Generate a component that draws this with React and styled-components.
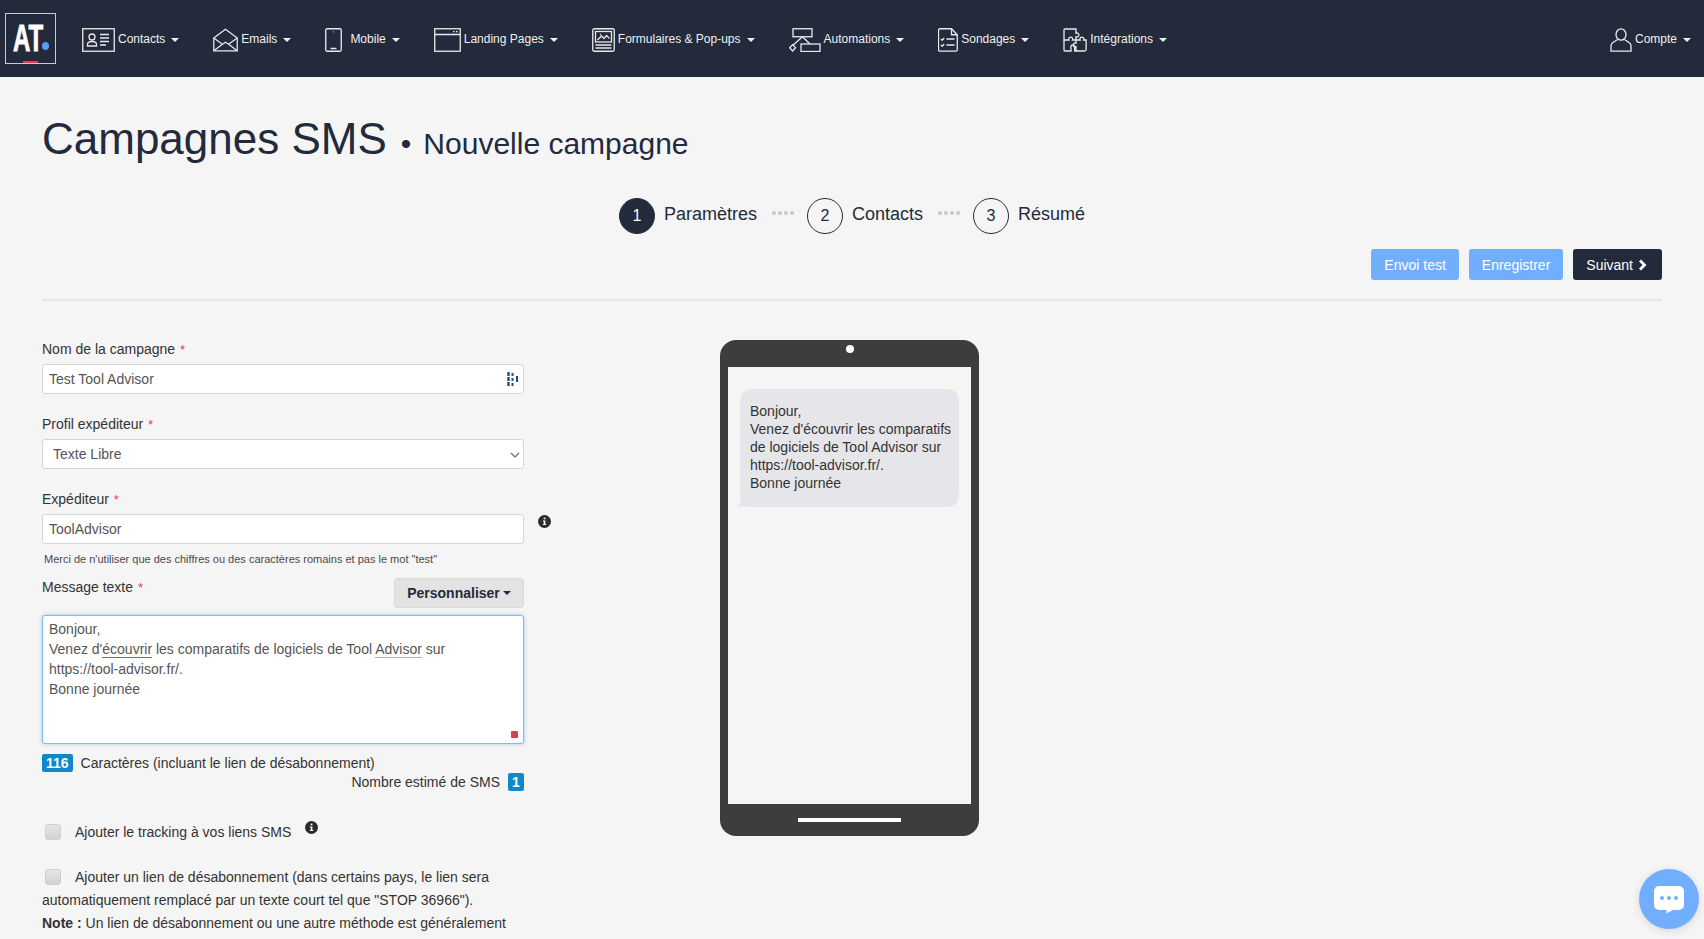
import React from 'react';
import styled, { createGlobalStyle } from 'styled-components';

const GlobalStyle = createGlobalStyle`
    html, body {
        margin: 0;
        height: 100%;
        overflow: hidden;
        background: #f5f5f5;
        font-family: "Liberation Sans", Arial, sans-serif;
        font-size: 14px;
        color: #333;
    }
    * { box-sizing: border-box; }
`

const ContactsIcon = () => (
    <Svg width="33" height="24" viewBox="0 0 33 24">
        <rect x="0.75" y="0.75" width="31.5" height="22.5" />
        <circle cx="10" cy="9" r="3" />
        <path d="M5.5 18v-1.5c0-2 2-3 4.5-3s4.5 1 4.5 3V18z" />
        <path d="M18 6.5h9M18 10h9M18 13.5h9M18 17h6" />
    </Svg>
)
const EmailsIcon = () => (
    <Svg width="25" height="24" viewBox="0 0 26 24">
        <path d="M0.8 10L13 0.9 25.2 10V23.2H0.8z" />
        <path d="M0.8 10l9 6.5 3.2-2.2 3.2 2.2 9-6.5M0.8 23.2l9-6.7M25.2 23.2l-9-6.7" />
    </Svg>
)
const MobileIcon = () => (
    <Svg width="17" height="24" viewBox="0 0 17 24">
        <rect x="0.75" y="0.75" width="15.5" height="22.5" rx="1.5" />
        <path d="M8.5 3.6v.6M5.5 20.5h6" />
    </Svg>
)
const LandingIcon = () => (
    <Svg width="27" height="24" viewBox="0 0 27 24">
        <rect x="0.75" y="0.75" width="25.5" height="22.5" />
        <path d="M0.75 6.5h25.5M19 3.6h1.6M22 3.6h1.6" />
    </Svg>
)
const FormIcon = () => (
    <Svg width="23" height="24" viewBox="0 0 23 24">
        <rect x="0.75" y="0.75" width="21.5" height="22.5" rx="1.5" />
        <rect x="3.5" y="3.5" width="16" height="10.5" />
        <path d="M5.5 12l4-4 2.5 2.5 2.5-3 3 3M8 6.5h1M3.5 17h16M3.5 20h16" />
    </Svg>
)
const AutomationsIcon = () => (
    <Svg width="32" height="24" viewBox="0 0 32 24">
        <rect x="4" y="0.75" width="19" height="8" />
        <rect x="12" y="16" width="19" height="7.5" />
        <path d="M3.6 16.6l3 3.2-3 3.2-2.9-3.2zM13.5 8.75L4.5 16.8M13.5 8.75L21 16" />
    </Svg>
)
const SondagesIcon = () => (
    <Svg width="20" height="24" viewBox="0 0 20 24">
        <path d="M2 0.75h11.5l5.75 6V21.7a1.5 1.5 0 0 1-1.5 1.5H2a1.5 1.5 0 0 1-1.5-1.5V2.25A1.5 1.5 0 0 1 2 0.75z" />
        <path d="M13.5 0.75v6h5.75M3 11l1.2 1.2L6.2 10M8.5 11h8M3 17l1.2 1.2 2-2.2M8.5 17h8" />
    </Svg>
)
const IntegrationsIcon = () => (
    <Svg width="24" height="24" viewBox="0 0 24 24">
        <path d="M1 2a1 1 0 0 1 1-1h11v4.200a2 2 0 1 1 0 3.600V12H9.500a2 2 0 1 0-3.600 0H1z" />
        <path d="M1 12v10a1 1 0 0 0 1 1h6v-3.200a2 2 0 1 1 3.600 0V23h10a1.500 1.500 0 0 0 1.500-1.500V12h-2.400a2 2 0 1 0-3.600 0H13v3.200a2 2 0 1 0 0 3.600V23" />
    </Svg>
)
const CompteIcon = () => (
    <Svg width="22" height="24" viewBox="0 0 22 24">
        <ellipse cx="11" cy="6.500" rx="5" ry="5.700" />
        <path d="M7.500 11.500L3 14.500Q1 15.800 1 18v5.200h20V18q0-2.200-2-3.500l-4.500-3" />
    </Svg>
)

const menu = [
    { label: 'Contacts', Icon: ContactsIcon },
    { label: 'Emails', Icon: EmailsIcon },
    { label: 'Mobile', Icon: MobileIcon, wide: true },
    { label: 'Landing Pages', Icon: LandingIcon },
    { label: 'Formulaires & Pop-ups', Icon: FormIcon },
    { label: 'Automations', Icon: AutomationsIcon },
    { label: 'Sondages', Icon: SondagesIcon },
    { label: 'Intégrations', Icon: IntegrationsIcon },
]

const steps = [
    { num: 1, label: 'Paramètres', active: true },
    { num: 2, label: 'Contacts' },
    { num: 3, label: 'Résumé' },
]

const Info = () => (
    <InfoIcon width="13" height="13" viewBox="0 0 13 13">
        <circle cx="6.500" cy="6.500" r="6.500" fill="#2b2b2b" />
        <rect x="5.700" y="2.600" width="1.700" height="1.700" fill="#fff" />
        <path d="M4.900 5.400h2.500v3.700h.9v1H4.800v-1h.9V6.400h-.8z" fill="#fff" />
    </InfoIcon>
)

const App = () => {
    return (
        <>
            <GlobalStyle />
            <Nav>
                <Logo>
                    <LogoText>AT</LogoText>
                    <LogoDot />
                    <LogoBar />
                </Logo>
                {menu.map(({ label, Icon, wide }) => (
                    <NavItem key={label}>
                        <Icon />
                        <NavLabel wide={wide}>{label}</NavLabel>
                        <Caret />
                    </NavItem>
                ))}
                <AccountItem>
                    <CompteIcon />
                    <NavLabel>Compte</NavLabel>
                    <Caret />
                </AccountItem>
            </Nav>

            <Main>
                <TitleRow>
                    <Title>Campagnes SMS</Title>
                    <TitleDot>•</TitleDot>
                    <SubTitle>Nouvelle campagne</SubTitle>
                </TitleRow>

                <Steps>
                    {steps.map(({ num, label, active }, i) => (
                        <React.Fragment key={num}>
                            {i > 0 && <StepDots><i /><i /><i /><i /></StepDots>}
                            <StepNum active={active}>{num}</StepNum>
                            <StepLabel>{label}</StepLabel>
                        </React.Fragment>
                    ))}
                </Steps>

                <Actions>
                    <Button>Envoi test</Button>
                    <Button>Enregistrer</Button>
                    <Button dark>
                        Suivant
                        <svg width="9" height="12" viewBox="0 0 9 12">
                            <path d="M2 1.500L6.500 6 2 10.500" fill="none" stroke="#fff" strokeWidth="2.800" />
                        </svg>
                    </Button>
                </Actions>
                <Divider />

                <Columns>
                    <Form>
                        <Label>Nom de la campagne <Req>*</Req></Label>
                        <Field>
                            Test Tool Advisor
                            <FieldBadge width="12" height="14" viewBox="0 0 12 14">
                                <path d="M1.500 0v14" stroke="#1d4f86" strokeWidth="2.400" strokeDasharray="4 1" fill="none" />
                                <path d="M5.500 1v3M5.500 6v3M5.500 11v3M10 4v6" stroke="#1d4f86" strokeWidth="2" fill="none" />
                            </FieldBadge>
                        </Field>

                        <Label>Profil expéditeur <Req>*</Req></Label>
                        <SelectField>
                            Texte Libre
                            <SelectArrow width="10" height="6" viewBox="0 0 10 6">
                                <path d="M1 1l4 4 4-4" fill="none" stroke="#666" strokeWidth="1.200" />
                            </SelectArrow>
                        </SelectField>

                        <Label>Expéditeur <Req>*</Req></Label>
                        <FieldRow>
                            <Field flat>ToolAdvisor</Field>
                            <Info />
                        </FieldRow>
                        <Help>Merci de n'utiliser que des chiffres ou des caractères romains et pas le mot "test"</Help>

                        <MessageHead>
                            <Label flat>Message texte <Req>*</Req></Label>
                            <PersoButton>Personnaliser <ButtonCaret /></PersoButton>
                        </MessageHead>
                        <TextArea>
                            Bonjour,<br />
                            Venez d'<Spell>écouvrir</Spell> les comparatifs de logiciels de Tool <Spell light>Advisor</Spell> sur<br />
                            https://tool-advisor.fr/.<br />
                            Bonne journée
                            <RedMark />
                        </TextArea>

                        <CountRow>
                            <Badge>116</Badge>
                            Caractères (incluant le lien de désabonnement)
                        </CountRow>
                        <CountRow right>
                            Nombre estimé de SMS
                            <Badge>1</Badge>
                        </CountRow>

                        <CheckLine>
                            <Check />
                            Ajouter le tracking à vos liens SMS
                            <Info />
                        </CheckLine>
                        <CheckText>
                            <Check />
                            Ajouter un lien de désabonnement (dans certains pays, le lien sera
                            automatiquement remplacé par un texte court tel que "STOP 36966").<br />
                            <b>Note :</b> Un lien de désabonnement ou une autre méthode est généralement
                        </CheckText>
                    </Form>

                    <Phone>
                        <PhoneTop><Camera /></PhoneTop>
                        <Screen>
                            <Bubble>
                                Bonjour,<br />
                                Venez d'écouvrir les comparatifs<br />
                                de logiciels de Tool Advisor sur<br />
                                https://tool-advisor.fr/.<br />
                                Bonne journée
                            </Bubble>
                        </Screen>
                        <PhoneBottom><HomeBar /></PhoneBottom>
                    </Phone>
                </Columns>
            </Main>

            <ChatButton>
                <svg width="32" height="29" viewBox="0 0 32 29">
                    <path d="M6 1h20a5 5 0 0 1 5 5v14a5 5 0 0 1-5 5h-6l-7 3.500 1-3.500H6a5 5 0 0 1-5-5V6a5 5 0 0 1 5-5z" fill="#fff" />
                    <circle cx="9" cy="13" r="2" fill="#72aefe" />
                    <circle cx="16" cy="13" r="2" fill="#72aefe" />
                    <circle cx="23" cy="13" r="2" fill="#72aefe" />
                </svg>
            </ChatButton>
        </>
    )
}

const Nav = styled.nav`
    display: flex;
    align-items: center;
    gap: 34px;
    height: 77px;
    padding: 2px 13px 0 5px;
    background: #232a3b;
    color: #f0f0f0;
`
const Logo = styled.div`
    position: relative;
    flex: none;
    width: 51px;
    height: 51px;
    margin: -2px -8px 0 0;
    border: 1.5px solid #c9cbd0;
    overflow: hidden;
`
const LogoText = styled.span`
    display: block;
    margin: 6px 0 0 7px;
    font-size: 37px;
    font-weight: bold;
    line-height: 37px;
    color: #fff;
    -webkit-text-stroke: .8px #fff;
    transform: scaleX(.65);
    transform-origin: left center;
`
const LogoDot = styled.span`
    position: absolute;
    left: 36px;
    top: 28px;
    width: 7px;
    height: 8px;
    border-radius: 50%;
    background: #5a9cf8;
`
const LogoBar = styled.span`
    position: absolute;
    left: 17px;
    bottom: 0;
    width: 15px;
    height: 2px;
    background: #e8394f;
`
const Svg = styled.svg`
    flex: none;
    fill: none;
    stroke: #e9eaec;
    stroke-width: 1.300;
`
const NavItem = styled.div`
    display: flex;
    align-items: center;
    gap: 3px;
`
const AccountItem = styled(NavItem)`
    margin-left: auto;
`
const NavLabel = styled.span`
    font-size: 12px;
    line-height: 14px;
    margin: -2px 0 0 ${props => props.wide ? '5px' : '0'};
    white-space: nowrap;
`
const Caret = styled.span`
    width: 0;
    height: 0;
    margin: 0 0 0 3px;
    border-left: 4px solid transparent;
    border-right: 4px solid transparent;
    border-top: 4px solid #f0f0f0;
`

const Main = styled.main`
    padding: 0 42px;
`
const TitleRow = styled.div`
    display: flex;
    align-items: baseline;
    height: 60px;
    margin-top: 32px;
    line-height: 60px;
    color: #232a3b;
`
const Title = styled.h1`
    margin: 0;
    font-size: 44px;
    font-weight: normal;
`
const TitleDot = styled.span`
    margin: 0 12px 0 14px;
    font-size: 30px;
`
const SubTitle = styled.h2`
    margin: 0;
    font-size: 30px;
    font-weight: normal;
`
const Steps = styled.div`
    display: flex;
    align-items: center;
    justify-content: center;
    height: 36px;
    margin-top: 29px;
    color: #232a3b;
`
const StepNum = styled.span`
    display: flex;
    align-items: center;
    justify-content: center;
    width: 36px;
    height: 36px;
    border-radius: 50%;
    border: 1px solid #232a3b;
    font-size: 16px;
    background: ${props => props.active ? '#232a3b' : 'transparent'};
    color: ${props => props.active ? '#fff' : '#232a3b'};
`
const StepLabel = styled.span`
    margin: -4px 0 0 9px;
    font-size: 18px;
`
const StepDots = styled.span`
    display: flex;
    gap: 2px;
    margin: -6px 13px 0 15px;
    i {
        width: 4px;
        height: 4px;
        border-radius: 50%;
        background: #c8c8c8;
    }
`
const Actions = styled.div`
    display: flex;
    justify-content: flex-end;
    gap: 10px;
    margin-top: 15px;
`
const Button = styled.button`
    display: flex;
    align-items: center;
    gap: ${props => props.dark ? '5px' : '0'};
    height: 31px;
    padding: 0 ${props => props.dark ? '15px' : '13px'} 0 13px;
    border: 0;
    border-radius: 3px;
    font-family: inherit;
    font-size: 14px;
    color: #fff;
    background: ${props => props.dark ? '#232a3b' : '#72aefe'};
`
const Divider = styled.hr`
    margin: 19px 0 0;
    height: 1.500px;
    border: 0;
    background: #e6e6e6;
`
const Columns = styled.div`
    display: flex;
    align-items: flex-start;
    gap: 196px;
    margin-top: 38px;
`
const Form = styled.div`
    flex: none;
    width: 482px;
`
const Label = styled.div`
    height: 20px;
    margin-bottom: ${props => props.flat ? '0' : '5px'};
    font-size: 14px;
    line-height: 20px;
    color: #333;
`
const Req = styled.span`
    margin-left: 1px;
    font-size: 13px;
    color: #e33b55;
`
const Field = styled.div`
    position: relative;
    display: flex;
    align-items: center;
    width: 482px;
    height: 30px;
    margin-bottom: ${props => props.flat ? '0' : '20px'};
    padding: 0 6px;
    flex: none;
    background: #fff;
    border: 1px solid #d6d6d6;
    border-radius: 3px;
    font-size: 14px;
    color: #555;
`
const SelectField = styled(Field)`
    padding-left: 10px;
`
const FieldBadge = styled.svg`
    position: absolute;
    right: 4px;
    top: 7px;
`
const SelectArrow = styled.svg`
    position: absolute;
    right: 3px;
    top: 12px;
`
const FieldRow = styled.div`
    display: flex;
    align-items: flex-start;
`
const InfoIcon = styled.svg`
    flex: none;
    margin: 0 0 0 14px;
    position: relative;
    top: 1px;
`
const Help = styled.div`
    margin: 9px 0 0 2px;
    font-size: 11px;
    line-height: 13px;
    color: #4a4a4a;
`
const MessageHead = styled.div`
    display: flex;
    justify-content: space-between;
    align-items: flex-start;
    height: 37px;
    margin-top: 12px;
    ${Label} {
        margin-top: -1px;
    }
`
const PersoButton = styled.div`
    display: flex;
    align-items: center;
    justify-content: center;
    gap: 3px;
    width: 130px;
    height: 30px;
    background: #e3e3e3;
    border: 1px solid #d9d9d9;
    border-radius: 4px;
    font-size: 14px;
    font-weight: bold;
    color: #232a3b;
`
const ButtonCaret = styled.span`
    border-left: 4px solid transparent;
    border-right: 4px solid transparent;
    border-top: 4px solid #232a3b;
`
const TextArea = styled.div`
    position: relative;
    height: 129px;
    padding: 3px 6px;
    background: #fff;
    border: 1px solid #7fbaf7;
    border-radius: 3px;
    box-shadow: 0 0 4px rgba(102, 175, 233, .6);
    line-height: 20px;
    color: #555;
`
const Spell = styled.span`
    border-bottom: 1.500px solid ${props => props.light ? '#8fb4f5' : '#5b6bdc'};
`
const RedMark = styled.span`
    position: absolute;
    right: 5px;
    bottom: 5px;
    width: 7px;
    height: 7px;
    border-radius: 1px;
    background: #e33b55;
`
const CountRow = styled.div`
    display: flex;
    align-items: center;
    justify-content: ${props => props.right ? 'flex-end' : 'flex-start'};
    gap: 8px;
    height: 18px;
    margin-top: ${props => props.right ? '1px' : '10px'};
    color: #333;
`
const Badge = styled.span`
    display: flex;
    align-items: center;
    justify-content: center;
    min-width: 16px;
    height: 18px;
    padding: 0 4px;
    border-radius: 2px;
    background: #1088c9;
    color: #fff;
    font-weight: bold;
`
const Check = styled.span`
    display: inline-block;
    flex: none;
    width: 16px;
    height: 16px;
    margin: 0 14px 0 3px;
    vertical-align: -3px;
    border-radius: 3px;
    background: linear-gradient(#e6e6e6, #d2d2d2);
    border: 1px solid #cfcfcf;
`
const CheckLine = styled.div`
    display: flex;
    align-items: center;
    height: 18px;
    margin-top: 32px;
    color: #333;
    svg {
        position: relative;
        top: -4px;
    }
`
const CheckText = styled.div`
    margin-top: 25px;
    width: 482px;
    line-height: 23px;
    color: #333;
`
const Phone = styled.div`
    flex: none;
    width: 259px;
    height: 496px;
    margin-top: 1px;
    display: flex;
    flex-direction: column;
    border-radius: 16px;
    background: #3d3d3d;
    overflow: hidden;
`
const PhoneTop = styled.div`
    display: flex;
    justify-content: center;
    height: 27px;
    padding-top: 5px;
`
const Camera = styled.span`
    width: 8px;
    height: 8px;
    border-radius: 50%;
    background: #fff;
`
const Screen = styled.div`
    flex: 1;
    margin: 0 8px;
    padding: 22px 12px;
    background: #f5f5f5;
`
const Bubble = styled.div`
    position: relative;
    width: 219px;
    height: 118px;
    padding: 13px 0 0 10px;
    border-radius: 12px;
    background: #e5e5ea;
    font-size: 14px;
    line-height: 18px;
    white-space: nowrap;
    color: #333;
    &::after {
        content: '';
        position: absolute;
        left: -3px;
        bottom: 0;
        width: 12px;
        height: 9px;
        background: #e5e5ea;
        clip-path: polygon(40% 0, 100% 100%, 0 100%, 30% 60%);
    }
`
const PhoneBottom = styled.div`
    display: flex;
    justify-content: center;
    height: 32px;
    padding-top: 14px;
`
const HomeBar = styled.span`
    width: 103px;
    height: 4px;
    background: #fff;
`
const ChatButton = styled.div`
    position: fixed;
    right: 5px;
    bottom: 10px;
    display: flex;
    align-items: center;
    justify-content: center;
    width: 60px;
    height: 60px;
    border-radius: 50%;
    background: #72aefe;
    box-shadow: 0 2px 8px rgba(0, 0, 0, .12);
`

export default App
